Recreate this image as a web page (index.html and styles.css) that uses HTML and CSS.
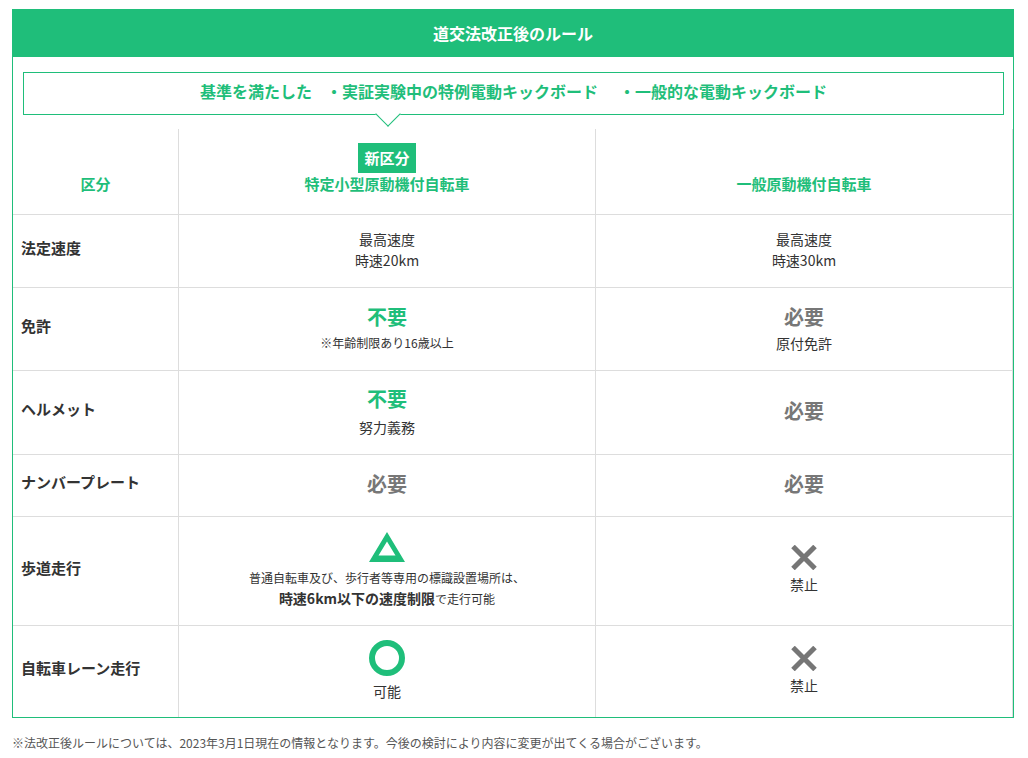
FILE: index.html
```html
<!DOCTYPE html>
<html lang="ja">
<head>
<meta charset="utf-8">
<title>道交法改正後のルール</title>
<link rel="stylesheet" href="styles.css">
</head>
<body>
<div class="wrap">
  <div class="title">道交法改正後のルール</div>
  <div class="frame">
    <div class="types">
      <span class="opt">基準を満たした</span>
      <span class="opt opt-2">・実証実験中の特例電動キックボード</span>
      <span class="opt opt-3">・一般的な電動キックボード</span>
      <span class="notch"></span>
    </div>
    <div class="table">
      <div class="cell head">区分</div>
      <div class="cell head"><span class="badge">新区分</span>特定小型原動機付自転車</div>
      <div class="cell head">一般原動機付自転車</div>

      <div class="cell label">法定速度</div>
      <div class="cell val"><span class="txt">最高速度</span><span class="txt">時速20km</span></div>
      <div class="cell val"><span class="txt">最高速度</span><span class="txt">時速30km</span></div>

      <div class="cell label">免許</div>
      <div class="cell val"><span class="big ok">不要</span><span class="small">※年齢制限あり16歳以上</span></div>
      <div class="cell val"><span class="big ng">必要</span><span class="txt">原付免許</span></div>

      <div class="cell label">ヘルメット</div>
      <div class="cell val"><span class="big ok">不要</span><span class="txt tall">努力義務</span></div>
      <div class="cell val"><span class="big ng">必要</span></div>

      <div class="cell label">ナンバープレート</div>
      <div class="cell val"><span class="big ng">必要</span></div>
      <div class="cell val"><span class="big ng">必要</span></div>

      <div class="cell label">歩道走行</div>
      <div class="cell val">
        <svg class="tri" width="36" height="30" viewBox="0 0 36 30"><path d="M18 0 L36 30 L0 30 Z M18 9.5 L9.5 23.5 L26.5 23.5 Z" fill="#1fbe7a" fill-rule="evenodd"/></svg>
        <span class="small">普通自転車及び、歩行者等専用の標識設置場所は、</span>
        <span class="small"><b class="strong">時速6km以下の速度制限</b>で走行可能</span>
      </div>
      <div class="cell val">
        <svg class="cross" width="26" height="25" viewBox="0 0 26 25"><path d="M2 1.5 L24 23.5 M24 1.5 L2 23.5" stroke="#767676" stroke-width="5"/></svg>
        <span class="txt">禁止</span>
      </div>

      <div class="cell label">自転車レーン走行</div>
      <div class="cell val">
        <svg class="ring" width="36" height="36" viewBox="0 0 36 36"><circle cx="18" cy="18" r="15" fill="none" stroke="#1fbe7a" stroke-width="6"/></svg>
        <span class="txt">可能</span>
      </div>
      <div class="cell val">
        <svg class="cross" width="26" height="25" viewBox="0 0 26 25"><path d="M2 1.5 L24 23.5 M24 1.5 L2 23.5" stroke="#767676" stroke-width="5"/></svg>
        <span class="txt">禁止</span>
      </div>
    </div>
  </div>
  <p class="note">※法改正後ルールについては、2023年3月1日現在の情報となります。今後の検討により内容に変更が出てくる場合がございます。</p>
</div>
</body>
</html>
```
FILE: styles.css
```css
* { box-sizing: border-box; }
html, body { margin: 0; padding: 0; background: #fff; }
body {
  font-family: "Noto Sans CJK JP", "Noto Sans", sans-serif;
  color: #333;
}
.wrap {
  width: 1002px;
  margin: 9px 0 0 12px;
}
.title {
  height: 48px;
  background: #1fbe7a;
  color: #fff;
  font-size: 16px;
  font-weight: bold;
  display: flex;
  align-items: center;
  justify-content: center;
}
.frame {
  border: 1px solid #1fbe7a;
  border-top: none;
  padding-top: 15px;
}
.types {
  position: relative;
  margin: 0 9px 0 10px;
  height: 43px;
  padding-bottom: 5px;
  border: 1px solid #1fbe7a;
  display: flex;
  align-items: center;
  justify-content: center;
  color: #1fbe7a;
  font-size: 16px;
  font-weight: bold;
}
.opt-2 { margin-left: 14px; }
.opt-3 { margin-left: 21px; }
.notch {
  position: absolute;
  left: 355px;
  bottom: -9px;
  width: 18px;
  height: 18px;
  background: #fff;
  border-right: 1px solid #1fbe7a;
  border-bottom: 1px solid #1fbe7a;
  transform: rotate(45deg);
}
.table {
  margin-top: 14px;
  display: grid;
  grid-template-columns: 166px 417px 417px;
  grid-template-rows: 86px 73px 83px 84px 62px 109px 91px;
}
.cell {
  border-right: 1px solid #ddd;
  border-bottom: 1px solid #ddd;
  display: flex;
  flex-direction: column;
}
.cell:nth-last-child(-n+3) { border-bottom: none; }
.head {
  align-items: center;
  justify-content: flex-end;
  padding-bottom: 19px;
  color: #1fbe7a;
  font-size: 15px;
  font-weight: bold;
  line-height: 22px;
}
.badge {
  display: block;
  width: 58px;
  height: 30px;
  line-height: 29px;
  text-align: center;
  background: #1fbe7a;
  color: #fff;
  font-size: 15px;
}
.label {
  justify-content: center;
  padding-left: 8px;
  padding-bottom: 8px;
  font-size: 15px;
  font-weight: bold;
  color: #333;
}
.val {
  align-items: center;
  justify-content: center;
  text-align: center;
  padding-bottom: 2px;
}
.txt {
  font-size: 14px;
  line-height: 21px;
}
.txt.tall { line-height: 24px; }
.big {
  font-size: 20px;
  font-weight: bold;
  line-height: 28px;
  margin-bottom: 2px;
}
.ok { color: #1fbe7a; }
.ng { color: #777; }
.small {
  font-size: 12px;
  line-height: 20px;
}
.strong {
  font-size: 14px;
  font-weight: bold;
}
.tri { display: block; margin-bottom: 6px; }
.cross { display: block; margin-bottom: 4px; }
.ring { display: block; margin-bottom: 5px; }
.note {
  margin: 15px 0 0;
  font-size: 12px;
  line-height: 20px;
  color: #555;
}
```
